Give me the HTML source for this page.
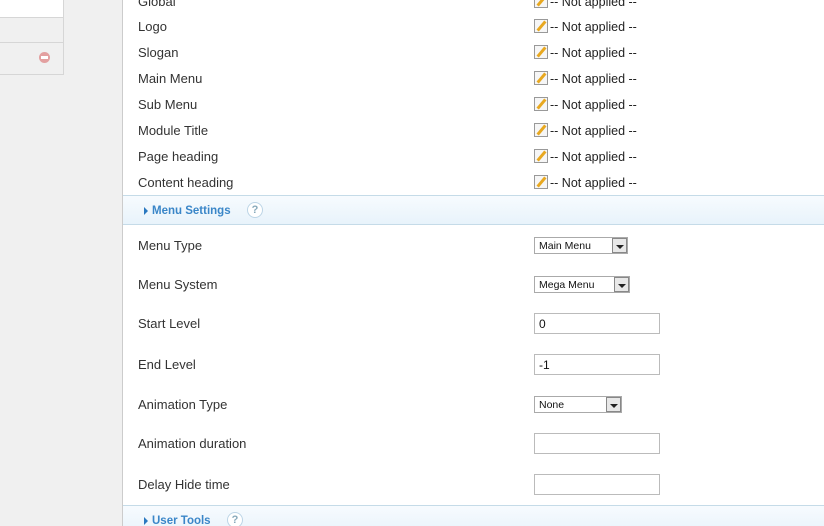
<!DOCTYPE html>
<html><head><meta charset="utf-8"><style>
*{box-sizing:border-box;margin:0;padding:0}
html,body{width:824px;height:526px;overflow:hidden}
body{background:#fff;font-family:"Liberation Sans",Arial,sans-serif;font-size:12px;color:#333;position:relative}
.left{position:absolute;left:0;top:0;width:123px;height:526px;background:#f0f0f0;border-right:1px solid #ccc}
.box{position:absolute;left:0;top:-2px;width:64px;height:77px;border:1px solid #d6d6d6;border-left:none}
.r1{position:absolute;left:0;top:0;width:63px;height:19px;background:#fff;border-bottom:1px solid #d6d6d6}
.r2{position:absolute;left:0;top:19px;width:63px;height:25px;border-bottom:1px solid #d6d6d6}
.minus{position:absolute;left:39px;top:53px;width:11px;height:11px;border-radius:50%;background:#e3a0a0}
.minus:after{content:"";position:absolute;left:2px;top:4px;width:7px;height:3px;background:#fff}
.lbl{position:absolute;left:138px;font-size:13px;color:#333}
.na{position:absolute;left:534px;font-size:12.5px;color:#222}
.ic{display:inline-block;width:14px;height:14px;border:1px solid #999;background:#f6f6f6;vertical-align:-2px;margin-right:2px;position:relative}
.ic:after{content:"";position:absolute;left:5px;top:0px;width:3px;height:12px;background:#e8a820;transform:rotate(40deg)}
.bar{position:absolute;left:123px;width:701px;height:30px;background:linear-gradient(#f7fbfe,#e8f3fb);border-top:1px solid #c5dbe8;border-bottom:1px solid #c5dbe8}
.bar span.t{position:absolute;left:29px;top:9px;font-weight:bold;font-size:11.5px;color:#3a86c8}
.bar .arr{position:absolute;left:21px;top:11px;width:0;height:0;border-left:4px solid #2a78c0;border-top:4px solid transparent;border-bottom:4px solid transparent}
.q{position:absolute;top:6px;width:16px;height:16px;border:1px solid #bcd5e6;border-radius:50%;background:#fff;color:#8ab;font-size:11px;font-weight:bold;text-align:center;line-height:14px}
.sel{position:absolute;left:534px;height:17px;border:1px solid #aaa;background:#fff;font-size:10.5px;color:#111;padding:2px 0 0 4px}
.sel b{position:absolute;right:0;top:0;width:15px;height:15px;border:1px solid #888;background:#e8e8e8}
.sel b:after{content:"";position:absolute;left:3px;top:6px;border-top:4px solid #222;border-left:4px solid transparent;border-right:4px solid transparent}
.inp{position:absolute;left:534px;width:126px;height:21px;border:1px solid #bbb;background:#fff;font-size:12px;padding:3px 0 0 4px;color:#111}
</style></head><body>
<div class="left"><div class="box"><div class="r1"></div><div class="r2"></div><div class="minus"></div></div></div>
<div class="lbl" style="top:-6px">Global</div><div class="na" style="top:-6px"><i class="ic"></i>-- Not applied --</div>
<div class="lbl" style="top:19px">Logo</div><div class="na" style="top:19px"><i class="ic"></i>-- Not applied --</div>
<div class="lbl" style="top:45px">Slogan</div><div class="na" style="top:45px"><i class="ic"></i>-- Not applied --</div>
<div class="lbl" style="top:71px">Main Menu</div><div class="na" style="top:71px"><i class="ic"></i>-- Not applied --</div>
<div class="lbl" style="top:97px">Sub Menu</div><div class="na" style="top:97px"><i class="ic"></i>-- Not applied --</div>
<div class="lbl" style="top:123px">Module Title</div><div class="na" style="top:123px"><i class="ic"></i>-- Not applied --</div>
<div class="lbl" style="top:149px">Page heading</div><div class="na" style="top:149px"><i class="ic"></i>-- Not applied --</div>
<div class="lbl" style="top:175px">Content heading</div><div class="na" style="top:175px"><i class="ic"></i>-- Not applied --</div>
<div class="bar" style="top:195px"><i class="arr"></i><span class="t">Menu Settings</span><div class="q" style="left:124px">?</div></div>
<div class="lbl" style="top:238px">Menu Type</div><div class="sel" style="top:237px;width:94px">Main Menu<b></b></div>
<div class="lbl" style="top:277px">Menu System</div><div class="sel" style="top:276px;width:96px">Mega Menu<b></b></div>
<div class="lbl" style="top:316px">Start Level</div><div class="inp" style="top:313px">0</div>
<div class="lbl" style="top:357px">End Level</div><div class="inp" style="top:354px">-1</div>
<div class="lbl" style="top:397px">Animation Type</div><div class="sel" style="top:396px;width:88px">None<b></b></div>
<div class="lbl" style="top:436px">Animation duration</div><div class="inp" style="top:433px"></div>
<div class="lbl" style="top:477px">Delay Hide time</div><div class="inp" style="top:474px"></div>
<div class="bar" style="top:505px"><i class="arr"></i><span class="t">User Tools</span><div class="q" style="left:104px">?</div></div>
</body></html>
